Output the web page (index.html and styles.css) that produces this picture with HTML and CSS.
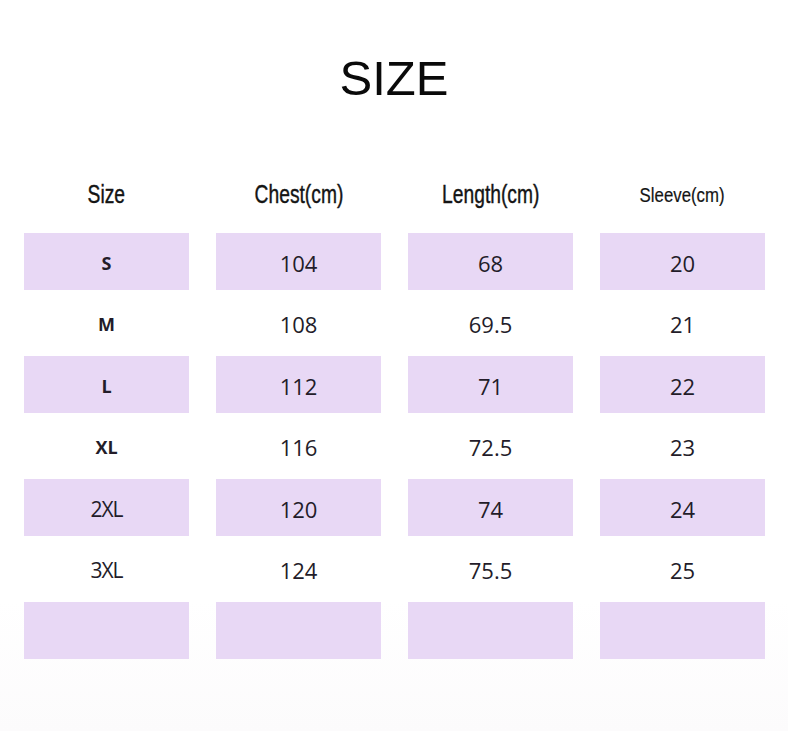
FILE: index.html
```html
<!DOCTYPE html>
<html>
<head>
<meta charset="utf-8">
<link rel="stylesheet" href="styles.css">
</head>
<body>
<div class="page">
  <h1 class="title">SIZE</h1>
  <div class="chart">
    <div class="head"><span>Size</span></div>
    <div class="head"><span>Chest(cm)</span></div>
    <div class="head"><span>Length(cm)</span></div>
    <div class="head small"><span>Sleeve(cm)</span></div>

    <div class="cell tint size">S</div>
    <div class="cell tint">104</div>
    <div class="cell tint">68</div>
    <div class="cell tint">20</div>

    <div class="cell size">M</div>
    <div class="cell">108</div>
    <div class="cell">69.5</div>
    <div class="cell">21</div>

    <div class="cell tint size">L</div>
    <div class="cell tint">112</div>
    <div class="cell tint">71</div>
    <div class="cell tint">22</div>

    <div class="cell size">XL</div>
    <div class="cell">116</div>
    <div class="cell">72.5</div>
    <div class="cell">23</div>

    <div class="cell tint size2">2XL</div>
    <div class="cell tint">120</div>
    <div class="cell tint">74</div>
    <div class="cell tint">24</div>

    <div class="cell size2">3XL</div>
    <div class="cell">124</div>
    <div class="cell">75.5</div>
    <div class="cell">25</div>

    <div class="cell tint"></div>
    <div class="cell tint"></div>
    <div class="cell tint"></div>
    <div class="cell tint"></div>
  </div>
</div>
</body>
</html>
```
FILE: styles.css
```css
html, body {
  margin: 0;
  padding: 0;
  background: #ffffff;
}
.page {
  width: 788px;
  height: 731px;
  box-sizing: border-box;
  padding-top: 50px;
  background: linear-gradient(#ffffff 0, #ffffff 600px, #fcfbfc 731px);
}
.title {
  margin: 0;
  text-align: center;
  font-family: "Liberation Sans", Arial, sans-serif;
  font-weight: 400;
  font-size: 49px;
  line-height: 56px;
  color: #0a0a0a;
}
.chart {
  display: grid;
  grid-template-columns: repeat(4, 165px);
  column-gap: 27px;
  row-gap: 4.5px;
  grid-template-rows: 67px repeat(7, 57px);
  margin: 55px 0 0 24px;
}
.head {
  display: flex;
  align-items: center;
  justify-content: center;
  font-family: "Liberation Sans", Arial, sans-serif;
  font-size: 26px;
  color: #141414;
}
.head span {
  display: inline-block;
  transform: scaleX(0.74);
  -webkit-text-stroke: 0.4px #141414;
}
.head.small {
  font-size: 21px;
}
.head.small span {
  transform: scaleX(0.8);
  -webkit-text-stroke: 0.2px #141414;
}
.cell {
  display: flex;
  align-items: center;
  justify-content: center;
  font-family: "Open Sans", "Noto Sans", sans-serif;
  font-size: 22px;
  color: #231c29;
  padding-top: 3px;
  box-sizing: border-box;
}
.tint {
  background: #e8d8f5;
}
.size {
  font-weight: 700;
  font-size: 18px;
}
.size2 {
  font-size: 21px;
  letter-spacing: -1px;
}
```
